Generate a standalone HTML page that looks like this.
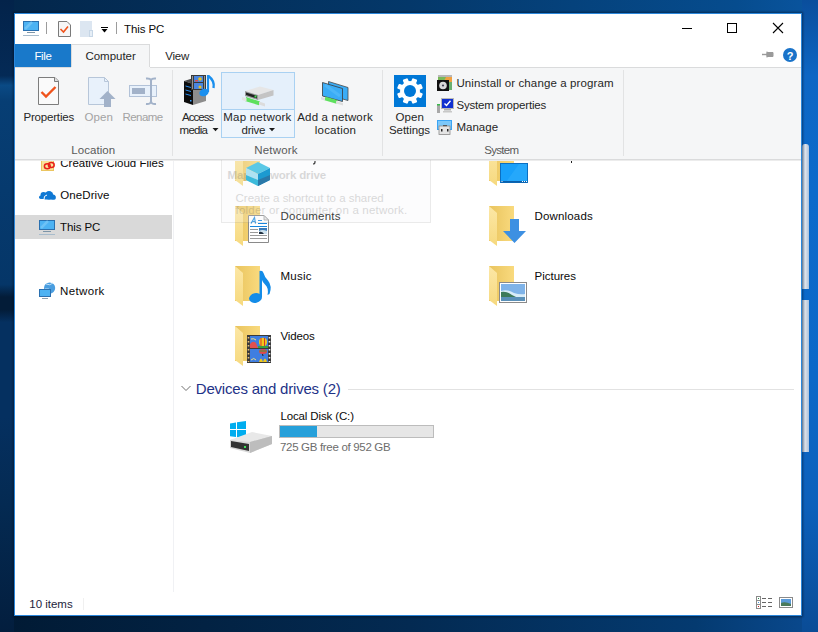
<!DOCTYPE html>
<html><head><meta charset="utf-8">
<style>
*{margin:0;padding:0;box-sizing:border-box}
html,body{width:818px;height:632px;overflow:hidden}
body{font-family:"Liberation Sans",sans-serif;font-size:12px;color:#000;position:relative;background:#07213f}
.a{position:absolute}
.t{position:absolute;white-space:nowrap}
svg{position:absolute;overflow:visible}
</style></head><body>
<!-- desktop -->
<div class="a" style="left:0;top:0;width:818px;height:632px;background:linear-gradient(90deg,#03213f 0%,#04325f 50%,#05447f 85%,#0a4e96 100%)"></div>
<div class="a" style="left:0;top:0;width:818px;height:13px;background:linear-gradient(90deg,#03264a 0%,#04386a 50%,#064c8e 90%,#0a55a0 100%)"></div>
<div class="a" style="left:0;top:616px;width:818px;height:16px;background:linear-gradient(90deg,#011a34 0%,#032a52 50%,#043a70 85%,#0a4a90 100%)"></div>
<div class="a" style="left:0;top:0;width:14px;height:632px;background:linear-gradient(180deg,#03234a 0%,#042a56 12%,#0a4a85 13.5%,#073e74 16%,#063a6e 30%,#053668 45%,#031c38 47%,#031c38 49%,#053060 51%,#053060 66%,#042a52 80%,#031e3e 100%)"></div>
<div class="a" style="left:802px;top:0;width:16px;height:632px;background:linear-gradient(180deg,#0a4e9c 0%,#0d66c4 12%,#0c6acb 30%,#0b68c8 60%,#0b60bb 80%,#0a4c96 100%)"></div>
<div class="a" style="left:802px;top:144px;width:7px;height:145px;border-radius:3px 3px 0 0;background:linear-gradient(90deg,#9fb8d4,#dde2ea 50%,#a8c0dc)"></div>
<div class="a" style="left:802px;top:300px;width:7px;height:152px;background:linear-gradient(90deg,#9fb8d4,#d9dee6 50%,#a8c0dc)"></div>
<!-- window -->
<div class="a" style="left:14px;top:13px;width:788px;height:603px;background:#fff;border:1px solid #2a86da;box-shadow:0 0 2px 1px rgba(0,8,20,.45)"></div>

<!-- nav pane -->
<div class="a" style="left:15px;top:215px;width:157px;height:24px;background:#d9d9d9"></div>
<div class="a" style="left:173px;top:161px;width:1px;height:431px;background:#f0f1f4"></div>

<!-- nav icons + content icons -->
<svg style="left:0;top:0" width="818" height="632">
  <defs>
    <linearGradient id="fb" x1="0" x2="1" y1="0" y2="0">
      <stop offset="0" stop-color="#e9c45e"/><stop offset="1" stop-color="#f9da7e"/>
    </linearGradient>
    <linearGradient id="ff" x1="0" x2="0" y1="0" y2="1">
      <stop offset="0" stop-color="#fce7a6"/><stop offset="1" stop-color="#f6d97e"/>
    </linearGradient>
    <g id="folder">
      <rect x="0" y="0" width="25" height="35" fill="url(#fb)"/>
      <path d="M0 0 L8 7 V40 L0 34 Z" fill="url(#ff)"/>
    </g>
  </defs>
  <!-- creative cloud -->
  <rect x="41.5" y="160.5" width="12" height="10" fill="#f9e39a" stroke="#ebc560"/>
  <ellipse cx="47.3" cy="166.3" rx="2.9" ry="2.5" fill="none" stroke="#e8201a" stroke-width="1.5"/>
  <ellipse cx="51.3" cy="165" rx="2.9" ry="2.5" fill="none" stroke="#e8201a" stroke-width="1.5"/>
  <!-- onedrive -->
  <circle cx="49" cy="195.3" r="4.2" fill="#0f78d4"/>
  <circle cx="53" cy="197" r="2.6" fill="#0f78d4"/>
  <rect x="44" y="196" width="11.6" height="3.6" rx="1" fill="#0f78d4"/>
  <circle cx="43.5" cy="195" r="3" fill="#0f78d4"/>
  <rect x="39" y="195.5" width="7" height="3.5" rx="1.7" fill="#0f78d4"/>
  <path d="M44 199.5 Q43.5 195.5 47 195" fill="none" stroke="#fff" stroke-width="1"/>
  <!-- this pc -->
  <rect x="39.5" y="220.5" width="15" height="9" fill="#4cb2f3" stroke="#2a70b0"/>
  <path d="M41 228 L48 221" stroke="#8fd2fa" stroke-width="2.5" opacity=".5"/>
  <rect x="43" y="231" width="8" height="1" fill="#7d95a8"/>
  <rect x="39" y="234" width="16" height="1" fill="#a8bccc"/>
  <!-- network -->
  <circle cx="49.6" cy="288" r="5.6" fill="#4a9ee0"/>
  <path d="M46 284 Q50 286 53 283 M45 289 Q49 288 51 291" stroke="#bfe0f8" stroke-width="1" fill="none"/>
  <rect x="39.5" y="289.5" width="11" height="7" fill="#4cb2f3" stroke="#2a70b0"/>
  <rect x="42" y="298" width="6" height="1" fill="#8aa0b0"/>
  <!-- 3D objects (row 1 left) -->
  <use href="#folder" x="235" y="146"/>
  <path d="M315 159 V162 Q315 164 313 164" stroke="#111" fill="none" stroke-width="1.2"/>
  <!-- desktop (row1 right) -->
  <use href="#folder" x="489" y="146"/>
  <rect x="500.5" y="163.5" width="27" height="19" fill="#18a0fa" stroke="#0b6fc2"/>
  <path d="M519 164 H527 V182 H506 Z" fill="#2eaefc" opacity=".6"/>
  <rect x="501" y="181" width="26" height="1.5" fill="#0b5ea8"/>
  <rect x="501.5" y="181" width="1" height="1" fill="#fff"/>
  <rect x="522" y="181" width="1" height="1" fill="#fff"/>
  <rect x="524" y="181" width="1" height="1" fill="#fff"/>
  <rect x="526" y="181" width="1" height="1" fill="#fff"/>
  <rect x="571" y="159" width="1" height="4" fill="#222"/>
  <!-- documents -->
  <use href="#folder" x="235" y="206"/>
  <path d="M248.5 215.5 H264 L268.5 220 V242.5 H248.5 Z" fill="#fff" stroke="#8a8a8a"/>
  <path d="M264 215.5 V220 H268.5 Z" fill="#e6e6e6" stroke="#9a9a9a" stroke-width=".8"/>
  <path d="M251 223.5 L254.5 217.5 L255.5 223.5 M252.3 221.5 H255.5" fill="none" stroke="#2a90e0" stroke-width="1.2"/>
  <path d="M258 220.5 H262 M258 223.5 H267 M250 226.5 H267" stroke="#1a86dc" stroke-width="1"/>
  <path d="M250 229.5 H258 M250 232.5 H258 M250 235.5 H267 M250 238.5 H267" stroke="#9a9a9a" stroke-width="1"/>
  <rect x="259" y="228" width="8" height="6" fill="#3a7ab8"/>
  <path d="M259 231 Q262 229 267 231 V234 H259 Z" fill="#cfe4f0"/>
  <path d="M259 232 Q262 231 264 234 H259 Z" fill="#203040"/>
  <!-- downloads -->
  <use href="#folder" x="489" y="206"/>
  <path d="M510 219 H519 V231 H526 L514.5 243 L503 231 H510 Z" fill="#3d90e2"/>
  <!-- music -->
  <use href="#folder" x="235" y="266"/>
  <path d="M259.5 271 Q262.5 270 263.5 273 Q264.5 277 268 280.5 Q272.5 286 269.5 294 L267.5 295 Q269 288 265 284.5 Q262.5 282 262 280 V297 H259.5 Z" fill="#148ce8"/>
  <ellipse cx="255.5" cy="298" rx="6.5" ry="4.8" transform="rotate(-12 255.5 298)" fill="#148ce8"/>
  <!-- pictures -->
  <use href="#folder" x="489" y="266"/>
  <rect x="499.5" y="282.5" width="27" height="20" fill="#fff" stroke="#8a8a8a"/>
  <rect x="501" y="284" width="24" height="17" fill="#7fb3e8"/>
  <path d="M501 291 Q508 289 514 293 Q520 295 525 294 V301 H501 Z" fill="#d8ecf8"/>
  <path d="M501 292 Q507 291 512 295 L516 297 H525 V301 H501 Z" fill="#3d7a5a"/>
  <rect x="501" y="297" width="24" height="4" fill="#5a90b8"/>
  <!-- videos -->
  <use href="#folder" x="235" y="326"/>
  <rect x="247" y="335" width="24" height="28" fill="#3a3a3a"/>
  <rect x="250" y="336" width="18" height="12" fill="#3f7ee0"/>
  <rect x="250" y="349" width="18" height="13" fill="#3f7ee0"/>
  <path d="M248.5 337 V362" stroke="#e8c27a" stroke-width="1.6" stroke-dasharray="1.4 2.6"/>
  <path d="M269.5 337 V362" stroke="#f0f0f0" stroke-width="1.6" stroke-dasharray="1.4 2.6"/>
  <ellipse cx="263" cy="342" rx="4" ry="4.2" fill="#f2c81a"/>
  <path d="M261 338 V346 M264.5 338 V346" stroke="#d83a2a" stroke-width="1"/>
  <path d="M258 346 L268 346 V348 H258 Z" fill="#3aa040"/>
  <path d="M250 344 Q253 340 256 343 L258 348 H250 Z" fill="#e05050"/>
  <path d="M251 339 Q254 338 256 340" stroke="#f0e080" stroke-width="1" fill="none"/>
  <ellipse cx="263" cy="351.5" rx="4" ry="2.5" fill="#e04848"/>
  <path d="M259.5 351 H266.5" stroke="#3aa040" stroke-width="1"/>
  <path d="M262.5 354 L263 356" stroke="#222" stroke-width="1"/>
  <path d="M259 362 Q261 355 263 362 Q265 355 267 362 Z" fill="#f2c81a"/>
  <path d="M251 360 Q254 357 256 360" stroke="#f0e080" stroke-width="1" fill="none"/>
  <!-- devices header -->
  <path d="M181.5 386 L186 390.5 L190.5 386" fill="none" stroke="#707070" stroke-width="1"/>
  <rect x="348" y="389" width="446" height="1" fill="#e2e2e2"/>
  <!-- drive -->
  <path d="M230 423.5 L236 422.5 V429 H230 Z" fill="#00adef"/>
  <path d="M237 422.3 L246 421 V429 H237 Z" fill="#00adef"/>
  <path d="M230 430 H236 V437 L230 436.3 Z" fill="#00adef"/>
  <path d="M237 430 H246 V438 L237 437.2 Z" fill="#00adef"/>
  <path d="M230 440 L250 437 L272 436 V444 L250 453 L230 448 Z" fill="#d8d8d8"/>
  <path d="M230 440 L252 432 L272 436 L250 442 Z" fill="#e8e8e8"/>
  <path d="M250 442 L272 436 V444 L250 453 Z" fill="#bdbdbd"/>
  <path d="M231 441 L249 444 V451 L231 447 Z" fill="#333"/>
  <rect x="244" y="446" width="2" height="2" fill="#3ee05a"/>
  <!-- progress -->
  <rect x="279.5" y="425.5" width="154" height="12" fill="#e6e6e6" stroke="#bcbcbc"/>
  <rect x="280" y="426" width="37" height="11" fill="#26a0da"/>

  <!-- status bar -->
  <rect x="83" y="598" width="1" height="12" fill="#f0f0f0"/>
  <!-- details view icon -->
  <rect x="756.5" y="596.5" width="4" height="12" fill="#fff" stroke="#8a8a8a"/>
  <rect x="758" y="598" width="1" height="1" fill="#2a8a4a"/>
  <rect x="758" y="602" width="1" height="1" fill="#4a9ae0"/>
  <rect x="758" y="606" width="1" height="1" fill="#d02020"/>
  <path d="M762 598.5 H766 M768 598.5 H772 M762 602.5 H766 M768 602.5 H772 M762 606.5 H766 M768 606.5 H772" stroke="#666" stroke-width="1"/><path d="M757 600.5 H760 M757 604.5 H760" stroke="#8a8a8a"/>
  <!-- large icons view -->
  <rect x="779.5" y="597.5" width="13" height="10" fill="#fff" stroke="#8a8a8a"/>
  <rect x="781" y="599" width="10" height="7" fill="#5a9ad8"/>
  <path d="M781 603 Q785 601 791 604 V606 H781 Z" fill="#4a7a5a"/>
</svg>

<span class="t" style="left:60.30px;top:158px;font-size:11.5px;line-height:11.5px;color:#0a0a0a;font-weight:normal;letter-spacing:-0.010px;">Creative Cloud Files</span>
<span class="t" style="left:60.30px;top:190px;font-size:11.5px;line-height:11.5px;color:#0a0a0a;font-weight:normal;letter-spacing:0.075px;">OneDrive</span>
<span class="t" style="left:60.00px;top:222px;font-size:11.5px;line-height:11.5px;color:#0a0a0a;font-weight:normal;letter-spacing:-0.098px;">This PC</span>
<span class="t" style="left:60.00px;top:286px;font-size:11.5px;line-height:11.5px;color:#0a0a0a;font-weight:normal;letter-spacing:0.362px;">Network</span>
<span class="t" style="left:280.60px;top:211px;font-size:11.5px;line-height:11.5px;color:#0a0a0a;font-weight:normal;letter-spacing:0.211px;">Documents</span>
<span class="t" style="left:534.40px;top:211px;font-size:11.5px;line-height:11.5px;color:#0a0a0a;font-weight:normal;letter-spacing:0.182px;">Downloads</span>
<span class="t" style="left:280.40px;top:271px;font-size:11.5px;line-height:11.5px;color:#0a0a0a;font-weight:normal;letter-spacing:0.280px;">Music</span>
<span class="t" style="left:534.60px;top:271px;font-size:11.5px;line-height:11.5px;color:#0a0a0a;font-weight:normal;letter-spacing:-0.027px;">Pictures</span>
<span class="t" style="left:280.40px;top:331px;font-size:11.5px;line-height:11.5px;color:#0a0a0a;font-weight:normal;letter-spacing:-0.121px;">Videos</span>
<span class="t" style="left:195.80px;top:381px;font-size:15px;line-height:15px;color:#1e3287;font-weight:normal;letter-spacing:-0.201px;">Devices and drives (2)</span>
<span class="t" style="left:280.40px;top:411px;font-size:11.5px;line-height:11.5px;color:#0a0a0a;font-weight:normal;letter-spacing:-0.127px;">Local Disk (C:)</span>
<span class="t" style="left:280.00px;top:442px;font-size:11.5px;line-height:11.5px;color:#6d6d6d;font-weight:normal;letter-spacing:-0.316px;">725 GB free of 952 GB</span>
<span class="t" style="left:29.30px;top:599px;font-size:11.5px;line-height:11.5px;color:#1e1e3c;font-weight:normal;letter-spacing:-0.016px;">10 items</span>
<!-- title bar icons -->
<svg style="left:0;top:0" width="818" height="632">
  <!-- PC icon -->
  <rect x="23.5" y="21.5" width="15" height="9" fill="#4cb2f3" stroke="#2a70b0"/>
  <path d="M25 29 L32 22" stroke="#8fd2fa" stroke-width="2.5" opacity=".5"/>
  <rect x="27" y="32" width="8" height="1" fill="#7d95a8"/>
  <rect x="23" y="35" width="16" height="1" fill="#a8bccc"/>
  <!-- separators -->
  <rect x="46" y="22" width="1" height="12" fill="#9c9c9c"/>
  <rect x="116" y="22" width="1" height="12" fill="#9c9c9c"/>
  <!-- doc check -->
  <path d="M58.5 21.5 H67 L70.5 25 V36.5 H58.5 Z" fill="#f6f6f6" stroke="#7a7a7a"/>
  <path d="M60.5 29 L63.5 32 L68 26.5" fill="none" stroke="#f0531c" stroke-width="1.6"/>
  <!-- new folder -->
  <rect x="80" y="21" width="12" height="16" fill="#dce6f1"/>
  <rect x="89.5" y="30.5" width="3" height="6" fill="#e6eef6" stroke="#c6d6e6"/>
  <!-- qat dropdown -->
  <rect x="101" y="27" width="7" height="1" fill="#000"/>
  <path d="M101.5 29 H107.5 L104.5 32.5 Z" fill="#000"/>
  <!-- window controls -->
  <rect x="682" y="28" width="10" height="1" fill="#000"/>
  <rect x="727.5" y="23.5" width="9" height="9" fill="none" stroke="#000"/>
  <path d="M773 23 L783 33 M783 23 L773 33" stroke="#000" stroke-width="1.1"/>
  <!-- pin -->
  <path d="M762 54.5 H767" stroke="#9a9a9a" stroke-width="1.4"/>
  <path d="M767 51.5 V57.5 M767 52.5 H773 V56.5 H767 Z" fill="#9a9a9a" stroke="#9a9a9a"/>
  <!-- help -->
  <circle cx="790" cy="55" r="7" fill="#1a73c9"/>
  <text x="790" y="59.5" font-family="Liberation Sans" font-weight="bold" font-size="11" fill="#fff" text-anchor="middle">?</text>
</svg>

<!-- tabs -->
<div class="a" style="left:15px;top:44px;width:56px;height:23px;background:#1979ca"></div>
<div class="a" style="left:71px;top:44px;width:79px;height:24px;background:#f5f6f7;border:1px solid #dadbdc;border-bottom:none"></div>

<!-- ribbon -->
<div class="a" style="left:15px;top:67px;width:786px;height:93px;background:#f5f6f7;border-bottom:1px solid #dadbdc"></div>
<div class="a" style="left:15px;top:67px;width:56px;height:1px;background:#dadbdc"></div>
<div class="a" style="left:150px;top:67px;width:651px;height:1px;background:#dadbdc"></div>
<div class="a" style="left:15px;top:160px;width:786px;height:1px;background:#ececec"></div>
<div class="a" style="left:172px;top:70px;width:1px;height:86px;background:#e2e3e4"></div>
<div class="a" style="left:382px;top:70px;width:1px;height:86px;background:#e2e3e4"></div>
<div class="a" style="left:623px;top:70px;width:1px;height:86px;background:#e2e3e4"></div>
<!-- map network drive hover -->
<div class="a" style="left:221px;top:72px;width:74px;height:66px;background:#eef5fc;border:1px solid #a9d1f2"></div>
<div class="a" style="left:222px;top:73px;width:72px;height:36px;background:#e5f0fb"></div>
<div class="a" style="left:222px;top:109px;width:72px;height:1px;background:#a9d1f2"></div>

<!-- ribbon icons -->
<svg style="left:0;top:0" width="818" height="632">
  <!-- properties -->
  <path d="M38.5 77.5 H55 L58.5 81 V104.5 H38.5 Z" fill="#fafafa" stroke="#7d7d7d"/>
  <path d="M54.5 77.5 V81.5 H58.5" fill="#e0e0e0" stroke="#7d7d7d"/>
  <path d="M41.5 92 L46 96.5 L55.5 87" fill="none" stroke="#f0531c" stroke-width="2.4"/>
  <!-- open -->
  <path d="M88.5 77.5 H104.5 L108.5 81.5 V104.5 H88.5 Z" fill="#e8f1fb" stroke="#b7c6d9"/>
  <path d="M104.5 77.5 V81.5 H108.5" fill="none" stroke="#b7c6d9"/>
  <path d="M99.5 99 L107.5 91 L115.5 99 H111 V107 H104 V99 Z" fill="#a2b2c9"/>
  <!-- rename -->
  <rect x="129.5" y="85.5" width="27" height="11" fill="#e8f1fb" stroke="#b2c2d8"/>
  <rect x="132" y="88" width="13" height="6" fill="#a2b2c9"/>
  <path d="M146 78.5 Q151 78 151 81 Q151 78 156 78.5 M146 104 Q151 104.5 151 101 Q151 104.5 156 104 M151 80 V102" fill="none" stroke="#a2b2c9" stroke-width="2"/>
  <!-- access media -->
  <path d="M184 81 L197 77 L206 80 L193 84 Z" fill="#4a4a4a"/>
  <path d="M193 84 L206 80 V101 L193 105 Z" fill="#8c8c8c"/>
  <path d="M184 81 L193 84 V105 L184 102 Z" fill="#0c0c0c"/>
  <path d="M185.5 86 L191 87.5 M185.5 90 L191 91.5 M185.5 94 L191 95.5" stroke="#2a8ef0" stroke-width="1"/>
  <rect x="190" y="100" width="1.5" height="1.5" fill="#3aa0ff"/>
  <rect x="191" y="75" width="15" height="15" fill="#3a3a3a"/>
  <path d="M192.5 76.5 V89 M204.5 76.5 V89" stroke="#eee" stroke-width="1" stroke-dasharray="1 1"/>
  <rect x="194" y="76" width="9" height="6" fill="#4a86e0"/>
  <rect x="194" y="83" width="9" height="6" fill="#4a86e0"/>
  <circle cx="200" cy="79" r="1.8" fill="#e8c020"/>
  <rect x="195" y="80" width="3" height="1.5" fill="#d85050"/>
  <circle cx="200" cy="87" r="1.5" fill="#e8c020"/>
  <path d="M208 75 V92" stroke="#1a8fee" stroke-width="2.2"/>
  <path d="M208.5 76 Q215 81 213.5 88" fill="none" stroke="#1a8fee" stroke-width="2.4"/>
  <ellipse cx="204" cy="92.5" rx="4.8" ry="3.6" transform="rotate(-20 204 92.5)" fill="#1a8fee"/>
  <!-- map network drive icon -->
  <path d="M245 91 L260 86.5 L273.5 90 L258 95 Z" fill="#e6e6e6"/>
  <path d="M258 95 L273.5 90 V95.5 L258 100 Z" fill="#c4c4c4"/>
  <path d="M245 91 L258 95 V100 L245 96 Z" fill="#9a9a9a"/>
  <path d="M246 92.5 L257 95.8 V98.5 L246 95 Z" fill="#222"/>
  <rect x="254.5" y="95.5" width="2" height="2" fill="#44e055"/>
  <path d="M245.5 99 L259.5 103.3" stroke="#5ee05e" stroke-width="4"/>
  <path d="M242 97 L246.5 98 V101.5 L242 100 Z" fill="#e4e4e4"/>
  <path d="M259 101.5 L265 103.5 V106.5 L259 104.5 Z" fill="#dcdcdc"/>
  <!-- add network location -->
  <path d="M328.5 81.5 L348 87.5 V100.5 L328.5 95 Z" fill="#3aacf6" stroke="#4a4a4a" stroke-width=".8"/>
  <path d="M322.5 82.5 L342.5 88.5 V101.5 L322.5 96 Z" fill="#3aacf6" stroke="#3a3a3a" stroke-width=".8"/>
  <path d="M325 85 L340 96" stroke="#5ec0fa" stroke-width="3" opacity=".5"/>
  <path d="M325 98.5 L337 102" stroke="#5ee05e" stroke-width="3.5"/>
  <path d="M321 97 L325 98 V100.5 L321 99.5 Z" fill="#dedede"/>
  <path d="M336 101 L343 103 V105.5 L336 103.5 Z" fill="#dedede"/>
  <!-- settings -->
  <rect x="394" y="75" width="32" height="32" fill="#0078d7"/>
  <g transform="translate(410 91)" fill="#fff">
    <circle r="10"/>
    <g transform="rotate(22.5)"><rect x="-2.6" y="-13" width="5.2" height="6" rx="1"/><rect x="-2.6" y="7" width="5.2" height="6" rx="1"/><rect x="-13" y="-2.6" width="6" height="5.2" rx="1"/><rect x="7" y="-2.6" width="6" height="5.2" rx="1"/></g>
    <g transform="rotate(67.5)"><rect x="-2.6" y="-13" width="5.2" height="6" rx="1"/><rect x="-2.6" y="7" width="5.2" height="6" rx="1"/><rect x="-13" y="-2.6" width="6" height="5.2" rx="1"/><rect x="7" y="-2.6" width="6" height="5.2" rx="1"/></g>
    <circle r="6" fill="#0078d7"/>
  </g>
  <!-- uninstall -->
  <rect x="438" y="75" width="14" height="2.5" fill="#b8b8b8"/>
  <rect x="438" y="77" width="14" height="13" fill="#f0a040"/>
  <path d="M438 77 H446 L444 81 H438 Z" fill="#78b858"/>
  <rect x="449" y="82" width="3" height="8" fill="#6ab070"/>
  <rect x="437" y="80" width="12" height="11" fill="#111"/>
  <circle cx="443" cy="85.5" r="3.8" fill="#d8d8d8"/>
  <circle cx="443" cy="85.5" r="1.1" fill="#445"/>
  <!-- system properties -->
  <rect x="441.5" y="98.5" width="12" height="10" fill="#1030d0" stroke="#b8b8b8"/>
  <path d="M444.5 103.5 L446.5 105.5 L450.5 100.8" fill="none" stroke="#fff" stroke-width="1.4"/>
  <rect x="444" y="109" width="7" height="1.5" fill="#b0b0b0"/>
  <rect x="443" y="111" width="9" height="1.5" fill="#c8c8c8"/>
  <rect x="437" y="104" width="3" height="9" fill="#a8a8a8"/>
  <rect x="437" y="104" width="3" height="1.5" fill="#3ab84a"/>
  <!-- manage -->
  <rect x="437" y="120" width="15" height="10" fill="#3aa4f4"/>
  <rect x="438" y="121" width="13" height="8" fill="#7cc8fa"/>
  <rect x="439" y="126" width="11" height="8.5" fill="#e4e4e4" stroke="#8a8a8a" stroke-width=".8"/>
  <rect x="443" y="125" width="4" height="1.2" fill="#555"/>
  <rect x="441" y="129" width="1.5" height="2.5" fill="#222"/>
  <rect x="447" y="129" width="1.5" height="2.5" fill="#222"/>
  <!-- dropdown triangles -->
  <path d="M212.5 128 H218.5 L215.5 131.3 Z" fill="#1a1a1a"/>
  <path d="M269 128 H275 L272 131.3 Z" fill="#1a1a1a"/>
</svg>

<!-- ALL TEXT -->
<span class="t" style="left:124.00px;top:24px;font-size:11.5px;line-height:11.5px;color:#0a0a0a;font-weight:normal;letter-spacing:-0.098px;">This PC</span>
<span class="t" style="left:34.40px;top:51px;font-size:11.5px;line-height:11.5px;color:#fff;font-weight:normal;letter-spacing:-0.312px;">File</span>
<span class="t" style="left:85.40px;top:51px;font-size:11.5px;line-height:11.5px;color:#262626;font-weight:normal;letter-spacing:-0.009px;">Computer</span>
<span class="t" style="left:165.30px;top:51px;font-size:11.5px;line-height:11.5px;color:#262626;font-weight:normal;letter-spacing:-0.238px;">View</span>
<span class="t" style="left:23.40px;top:112px;font-size:11.5px;line-height:11.5px;color:#262626;font-weight:normal;letter-spacing:-0.174px;">Properties</span>
<span class="t" style="left:84.40px;top:112px;font-size:11.5px;line-height:11.5px;color:#a3a3a3;font-weight:normal;letter-spacing:0.154px;">Open</span>
<span class="t" style="left:122.40px;top:112px;font-size:11.5px;line-height:11.5px;color:#a3a3a3;font-weight:normal;letter-spacing:-0.534px;">Rename</span>
<span class="t" style="left:71.30px;top:145px;font-size:11.5px;line-height:11.5px;color:#5a5a5a;font-weight:normal;letter-spacing:0.060px;">Location</span>
<span class="t" style="left:182.00px;top:112px;font-size:11.5px;line-height:11.5px;color:#262626;font-weight:normal;letter-spacing:-0.963px;">Access</span>
<span class="t" style="left:179.60px;top:125px;font-size:11.5px;line-height:11.5px;color:#262626;font-weight:normal;letter-spacing:-0.757px;">media</span>
<span class="t" style="left:223.30px;top:112px;font-size:11.5px;line-height:11.5px;color:#262626;font-weight:normal;letter-spacing:0.222px;">Map network</span>
<span class="t" style="left:241.60px;top:125px;font-size:11.5px;line-height:11.5px;color:#262626;font-weight:normal;letter-spacing:-0.283px;">drive</span>
<span class="t" style="left:297.30px;top:112px;font-size:11.5px;line-height:11.5px;color:#262626;font-weight:normal;letter-spacing:0.153px;">Add a network</span>
<span class="t" style="left:314.80px;top:125px;font-size:11.5px;line-height:11.5px;color:#262626;font-weight:normal;letter-spacing:0.208px;">location</span>
<span class="t" style="left:254.30px;top:145px;font-size:11.5px;line-height:11.5px;color:#5a5a5a;font-weight:normal;letter-spacing:0.162px;">Network</span>
<span class="t" style="left:395.40px;top:112px;font-size:11.5px;line-height:11.5px;color:#262626;font-weight:normal;letter-spacing:0.121px;">Open</span>
<span class="t" style="left:389.00px;top:125px;font-size:11.5px;line-height:11.5px;color:#262626;font-weight:normal;letter-spacing:-0.072px;">Settings</span>
<span class="t" style="left:456.40px;top:78px;font-size:11.5px;line-height:11.5px;color:#262626;font-weight:normal;letter-spacing:0.108px;">Uninstall or change a program</span>
<span class="t" style="left:456.40px;top:100px;font-size:11.5px;line-height:11.5px;color:#262626;font-weight:normal;letter-spacing:-0.170px;">System properties</span>
<span class="t" style="left:456.40px;top:122px;font-size:11.5px;line-height:11.5px;color:#262626;font-weight:normal;letter-spacing:0.027px;">Manage</span>
<span class="t" style="left:484.30px;top:145px;font-size:11.5px;line-height:11.5px;color:#5a5a5a;font-weight:normal;letter-spacing:-0.712px;">System</span>

<!-- tooltip -->
<div class="a" style="left:221px;top:160px;width:210px;height:63px;opacity:.2">
  <div class="a" style="left:0;top:0;width:210px;height:63px;background:#f2f4f8;border:1px solid #9a9a9a;border-top:none"></div>
</div>
<div class="a" style="left:0;top:0;width:818px;height:632px;opacity:.2">
<span class="t" style="left:227.50px;top:170px;font-size:11.5px;line-height:11.5px;color:#4a4a4a;font-weight:bold;letter-spacing:-0.148px;">Map network drive</span>
<span class="t" style="left:235.60px;top:193px;font-size:11.5px;line-height:11.5px;color:#4a4a4a;font-weight:normal;letter-spacing:-0.030px;">Create a shortcut to a shared</span>
<span class="t" style="left:235.60px;top:205px;font-size:11.5px;line-height:11.5px;color:#4a4a4a;font-weight:normal;letter-spacing:0.195px;">folder or computer on a network.</span>
</div>
<svg style="left:0;top:0" width="818" height="632">
  <path d="M246 168 L258 162 L270 168 L258 174 Z" fill="#5ac8e6"/>
  <path d="M246 168 L258 174 V186 L246 180 Z" fill="#aee2f2"/>
  <path d="M246 175 L258 180 V186 L246 180 Z" fill="#3cbada"/>
  <path d="M258 174 L270 168 V180 L258 186 Z" fill="#1c9ad0"/>
  <path d="M258 180 L270 175 V180 L258 186 Z" fill="#2a78a8"/>
</svg>

</body></html>
